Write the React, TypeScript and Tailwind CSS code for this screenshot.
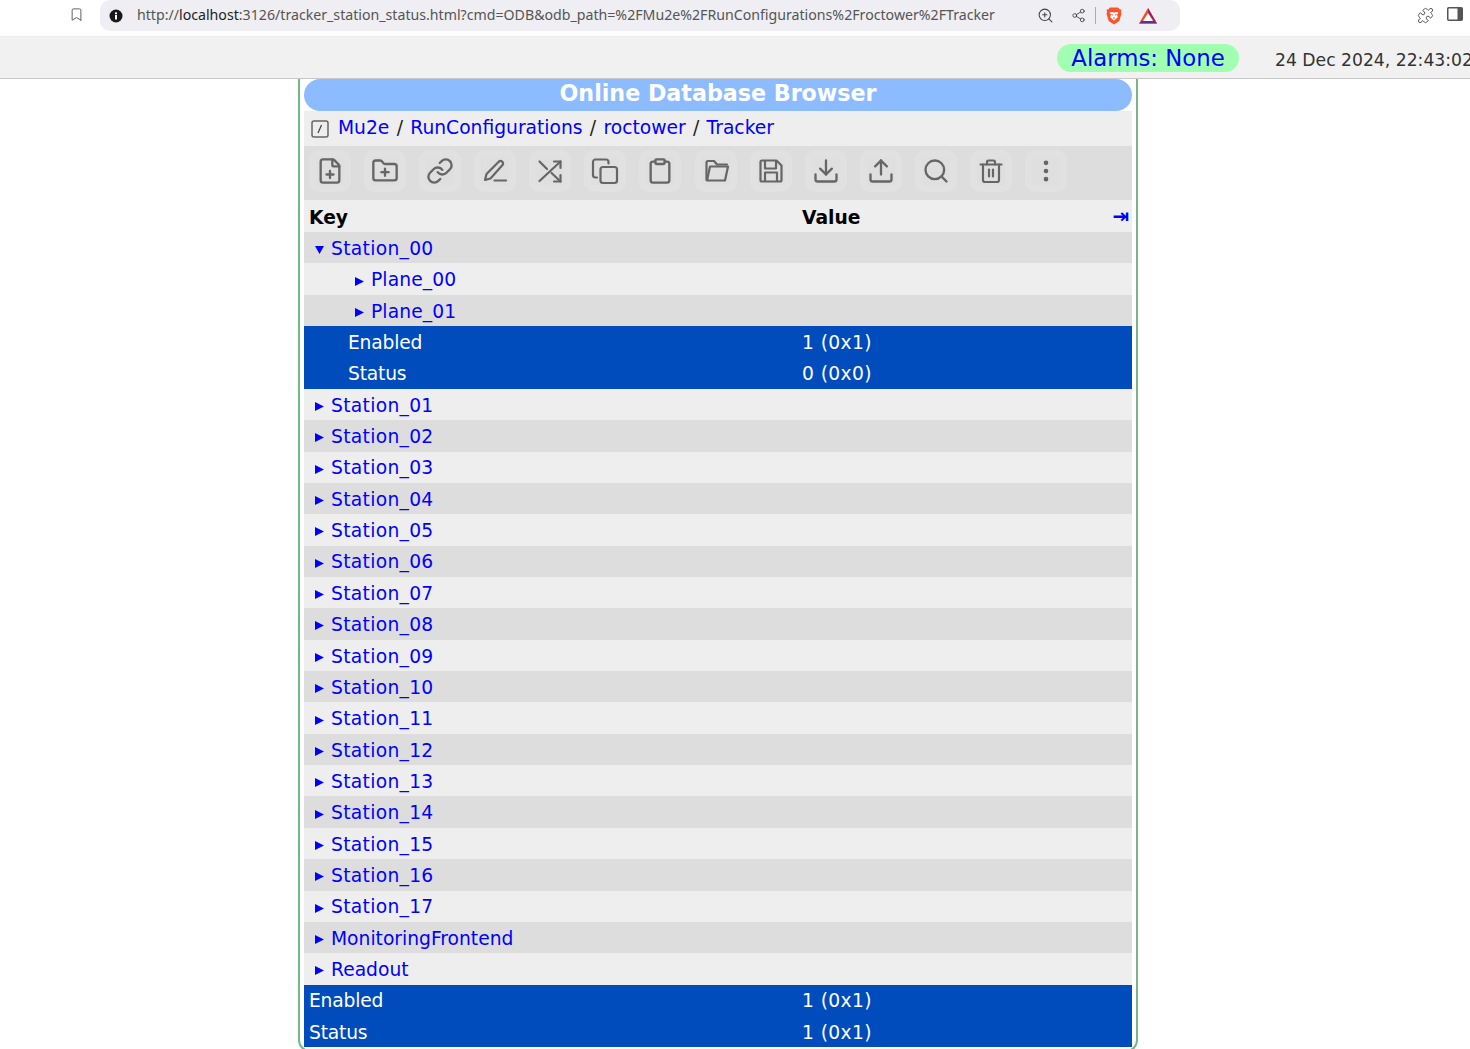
import { Bookmark, Clipboard, Download, EllipsisVertical, FilePlus, FolderPlus, Link, Puzzle, Search, Share2, Upload, ZoomIn } from 'lucide-react';
import type { ReactNode } from 'react';

const Glyph = ({ children }: { children: ReactNode }) => (
  <svg width="28" height="28" viewBox="0 0 28 28" fill="none" stroke="#666666" strokeWidth="2.2" strokeLinecap="round" strokeLinejoin="round">
    {children}
  </svg>
);

const lucide = (Icon: typeof Link) => <Icon size={28} strokeWidth={2} className="text-[#666666]" />;

const tools = [
  lucide(FilePlus),
  lucide(FolderPlus),
  lucide(Link),
  <Glyph>
    <path d="M4 23l1.500-6L18 4.500a2.500 2.500 0 0 1 3.500 3.500L9.500 21.500z" />
    <path d="M13.500 23.500H25" />
  </Glyph>,
  <Glyph>
    <path d="M18 4.500h6.500V11" />
    <path d="M24.500 4.500L3.500 24" />
    <path d="M3.500 4.500L11 12" />
    <path d="M15.500 16l9 8.500" />
    <path d="M24.500 18v6.500H18" />
  </Glyph>,
  <Glyph>
    <rect x="9.500" y="10" width="16.500" height="16" rx="2.500" />
    <path d="M6 20.500H4.500a2.500 2.500 0 0 1-2.500-2.500V5a2.500 2.500 0 0 1 2.500-2.500H15A2.500 2.500 0 0 1 17.500 5v1.500" />
  </Glyph>,
  lucide(Clipboard),
  <Glyph>
    <path d="M4.500 23V5.500A1.500 1.500 0 0 1 6 4h6l3 3.500h10" />
    <path d="M5 23.500L8 9.500h18l-3 14z" />
  </Glyph>,
  <Glyph>
    <path d="M5 3.500h14.500l5 5V23a1.500 1.500 0 0 1-1.500 1.500H5A1.500 1.500 0 0 1 3.500 23V5A1.500 1.500 0 0 1 5 3.500z" />
    <path d="M8 4v7.500h11V4.500" />
    <path d="M8 24v-8.500h12V24" />
  </Glyph>,
  lucide(Download),
  lucide(Upload),
  lucide(Search),
  <Glyph>
    <path d="M3.500 7.500h21" />
    <path d="M10 7.500V5a1.500 1.500 0 0 1 1.500-1.500h5A1.500 1.500 0 0 1 18 5v2.500" />
    <path d="M6 7.500V23a2 2 0 0 0 2 2h12a2 2 0 0 0 2-2V7.500" />
    <path d="M12 12.500v7" />
    <path d="M16 12.500v7" />
  </Glyph>,
  lucide(EllipsisVertical),
];

const stations = Array.from({ length: 17 }, (_, i) => `Station_${String(i + 1).padStart(2, '0')}`);

const Arrow = ({ open = false }: { open?: boolean }) => (
  <svg width="9" height="9" viewBox="0 0 9 9" className="mt-[1px] shrink-0">
    <path d={open ? 'M0 1h9L4.500 9z' : 'M0 0l9 4.500L0 9z'} fill="#0000ff" />
  </svg>
);

const FolderRow = ({ name, odd, indent, tracking = '' }: { name: string; odd: boolean; indent: string; tracking?: string }) => (
  <div className={`flex h-[31.36px] items-center gap-[7px] pt-[3px] ${indent} ${odd ? 'bg-[#eeeeee]' : 'bg-[#dddddd]'} text-[#0000ff]`}>
    <Arrow />
    <span className={tracking}>{name}</span>
  </div>
);

const ValueRow = ({ name, value, indent }: { name: string; value: string; indent: string }) => (
  <div className="flex h-[31.36px] items-center bg-[#004cbd] pt-[3px] text-[#ffffff]">
    <span className={`w-[498px] tracking-[-0.2px] ${indent}`}>{name}</span>
    <span className="tracking-[0.4px]">{value}</span>
  </div>
);

const BrowserBar = () => (
  <div className="flex h-[36px] items-start bg-white pl-[69px]">
    <Bookmark size={15} strokeWidth={1.5} className="mt-[7px] text-[#555]" />
    <div className="ml-[16px] flex h-[31px] w-[1080px] items-center rounded-[10px] bg-[#eeeef3] pl-[9px] font-['Noto_Sans',sans-serif] text-[14.16px] text-[#555]">
      <svg width="14" height="14" viewBox="0 0 14 14" className="shrink-0">
        <circle cx="7" cy="7" r="6.500" fill="#18181b" />
        <rect x="6" y="6" width="2" height="4.500" fill="#fff" />
        <rect x="6" y="3.400" width="2" height="1.800" fill="#fff" />
      </svg>
      <span className="ml-[14px] w-[900px] whitespace-nowrap">
        http://<span className="text-[#222]">localhost</span>:3126/tracker_station_status.html?cmd=ODB&amp;odb_path=%2FMu2e%2FRunConfigurations%2Froctower%2FTracker
      </span>
      <ZoomIn size={17} strokeWidth={1.5} className="text-[#444]" />
      <Share2 size={15} strokeWidth={1.4} className="ml-[17px] text-[#444]" />
      <div className="ml-[9px] h-[17px] w-px bg-[#aaa]" />
      <svg width="16" height="18" viewBox="0 0 16 18" className="ml-[10px]">
        <path d="M4 0.500h8l1.500 1.800 2 .4-.6 2.300.6 1.600-2.200 7.400L8 17.500l-5.300-3.500L.5 6.600l.6-1.600L.5 2.700l2-.4z" fill="#fb542b" />
        <path d="M3.500 5.500l2.700-.5L8 5.800 9.800 5l2.700.5-1.500 2.300.8 2.400L8 13.500l-3.800-3.300.8-2.400z" fill="#fff" />
        <path d="M5.500 7.500l1.500.5M10.500 7.500L9 8M8 10v2" stroke="#fb542b" strokeWidth="1" />
      </svg>
      <svg width="18" height="16" viewBox="0 0 18 16" className="ml-[17px]">
        <path d="M9 0L0 15.500h18z" fill="#ff4724" />
        <path d="M0 15.500L3.500 12.500h11l3.500 3z" fill="#662d91" />
        <path d="M9 0l9 15.500-3.500-3L9 5z" fill="#9e1f63" />
        <path d="M9 5l-5 8h10z" fill="#fff" />
      </svg>
    </div>
    <Puzzle size={17} strokeWidth={1.4} className="ml-[237px] mt-[7px] text-[#555]" />
    <svg width="16" height="14" viewBox="0 0 16 14" className="ml-[13px] mt-[7px]">
      <rect x="0.750" y="0.750" width="14.500" height="12.500" rx="1" fill="#fff" stroke="#555" strokeWidth="1.500" />
      <rect x="10.500" y="1" width="4.500" height="12" fill="#555" />
    </svg>
  </div>
);

const StatusBar = () => (
  <div className="flex h-[43px] items-center overflow-hidden whitespace-nowrap border-y border-b-[#c8c8c8] border-t-[#ececec] bg-[#f1f1f1] pl-[1057px]">
    <div className="flex h-[28px] w-[182px] shrink-0 items-center justify-center rounded-full bg-[#a0ffb0] pt-[1px] text-[22.8px] text-[#0000ff]">
      Alarms: None
    </div>
    <div className="ml-[36px] mt-[7px] shrink-0 text-[17.2px] text-[#333]">24 Dec 2024, 22:43:02</div>
  </div>
);

const App = () => {
  return (
    <div className="h-[1049px] w-[1470px] overflow-hidden bg-white font-['DejaVu_Sans',sans-serif] text-[18.7px] leading-none">
      <BrowserBar />
      <StatusBar />
      <div className="ml-[298px] h-[973px] w-[840px] rounded-b-[12px] border-x-2 border-b-2 border-[#76b68e] pl-[4px] pr-[4px]">
        <div className="flex h-[32px] items-center justify-center rounded-[16px] bg-[#8cbcff] pb-[3px] text-[22.2px] font-bold text-white">
          Online Database Browser
        </div>
        <div className="flex h-[35px] items-center bg-[#eeeeee] pl-[7px] text-[#222]">
          <svg width="18" height="18" viewBox="0 0 18 18" className="mr-[9px] mt-[1px]">
            <rect x="1" y="1" width="16" height="16" rx="2" fill="none" stroke="#666" strokeWidth="1.500" />
            <path d="M7 13l3.500-8" stroke="#444" strokeWidth="1.300" />
          </svg>
          <span className="text-[#0000ff]">Mu2e</span>
          <span className="mx-[7.3px]">/</span>
          <span className="text-[#0000ff]">RunConfigurations</span>
          <span className="mx-[7.3px]">/</span>
          <span className="text-[#0000ff]">roctower</span>
          <span className="mx-[7.3px]">/</span>
          <span className="text-[#0000ff]">Tracker</span>
        </div>
        <div className="flex h-[54px] items-start gap-[13.08px] bg-[#dddddd] pl-[5px] pt-[4px]">
          {tools.map((icon, i) => (
            <div key={i} className="flex h-[42px] w-[42px] items-center justify-center rounded-[10px] bg-[#e1e1e1]">
              <div className="bg-[#dfdfdf]">{icon}</div>
            </div>
          ))}
        </div>
        <div className="flex h-[32px] items-center bg-[#eeeeee] pl-[5px] pt-[4px] font-bold text-black">
          <span className="w-[493px]">Key</span>
          <span>Value</span>
          <span className="ml-auto mb-[4px] mr-[3px] text-[20px] text-[#0000ff]">⇥</span>
        </div>
        <div className="flex h-[31.36px] items-center gap-[7px] bg-[#dddddd] pl-[11px] pt-[3px] text-[#0000ff]">
          <Arrow open />
          <span className="tracking-[0.3px]">Station_00</span>
        </div>
        <FolderRow name="Plane_00" odd indent="pl-[51px]" tracking="tracking-[0.1px]" />
        <FolderRow name="Plane_01" odd={false} indent="pl-[51px]" tracking="tracking-[0.1px]" />
        <ValueRow name="Enabled" value="1 (0x1)" indent="pl-[44px]" />
        <ValueRow name="Status" value="0 (0x0)" indent="pl-[44px]" />
        {stations.map((s, i) => (
          <FolderRow key={s} name={s} odd={i % 2 === 0} indent="pl-[11px]" tracking="tracking-[0.3px]" />
        ))}
        <FolderRow name="MonitoringFrontend" odd={false} indent="pl-[11px]" />
        <FolderRow name="Readout" odd indent="pl-[11px]" />
        <ValueRow name="Enabled" value="1 (0x1)" indent="pl-[5px]" />
        <ValueRow name="Status" value="1 (0x1)" indent="pl-[5px]" />
      </div>
    </div>
  );
};

export default App;
